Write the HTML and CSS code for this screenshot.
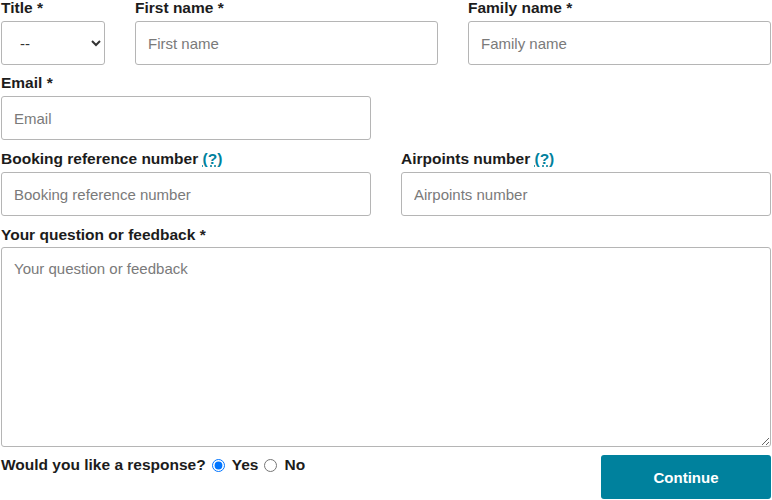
FILE: index.html
```html
<!DOCTYPE html>
<html lang="en">

<head>
    <meta charset="UTF-8">
    <meta name="viewport" content="width=device-width, initial-scale=1.0">
    <title>Contact us</title>
    <link rel="stylesheet" href="styles.css">
</head>

<body>
    <form class="contact">
        <div class="row">
            <div class="field title">
                <label for="title">Title <span class="req">*</span></label>
                <select id="title">
                    <option>--</option>
                    <option>Mr</option>
                    <option>Mrs</option>
                    <option>Ms</option>
                </select>
            </div>
            <div class="field">
                <label for="first">First name <span class="req">*</span></label>
                <input type="text" id="first" placeholder="First name">
            </div>
            <div class="field">
                <label for="family">Family name <span class="req">*</span></label>
                <input type="text" id="family" placeholder="Family name">
            </div>
        </div>
        <div class="row">
            <div class="field half">
                <label for="email">Email <span class="req">*</span></label>
                <input type="email" id="email" placeholder="Email">
            </div>
        </div>
        <div class="row">
            <div class="field">
                <label for="booking">Booking reference number <abbr title="Your six character booking reference">(?)</abbr></label>
                <input type="text" id="booking" placeholder="Booking reference number">
            </div>
            <div class="field">
                <label for="airpoints">Airpoints number <abbr title="Your Airpoints membership number">(?)</abbr></label>
                <input type="text" id="airpoints" placeholder="Airpoints number">
            </div>
        </div>
        <div class="row last">
            <div class="field">
                <label for="question">Your question or feedback <span class="req">*</span></label>
                <textarea id="question" placeholder="Your question or feedback"></textarea>
            </div>
        </div>
        <div class="actions">
            <div class="response">
                <span>Would you like a response?</span>
                <input type="radio" name="response" id="yes" checked>
                <label for="yes">Yes</label>
                <input type="radio" name="response" id="no">
                <label for="no">No</label>
            </div>
            <button type="button" class="continue">Continue</button>
        </div>
    </form>
</body>

</html>
```

FILE: styles.css
```css
body {
    margin: 0;
    font-family: "Liberation Sans", Arial, sans-serif;
    color: #1c1c1c;
}

.contact {
    padding: 0 1px;
}

.row {
    display: flex;
    gap: 30px;
    margin-bottom: 11px;
}

.row:first-child {
    margin-bottom: 10px;
}

.row.last {
    margin-bottom: 8px;
}

.field {
    flex: 1;
    min-width: 0;
}

.field.title {
    flex: 0 0 104px;
}

.field.half {
    flex: 0 0 370px;
}

.field label {
    display: block;
    height: 16px;
    line-height: 16px;
    margin-bottom: 5px;
    font-size: 15.5px;
    font-weight: bold;
    white-space: nowrap;
}

.row.last label {
    margin-bottom: 4px;
}

.req {
    color: #222;
}

abbr {
    color: #00819d;
    text-decoration: underline dotted;
    text-underline-offset: 2px;
    cursor: help;
}

input[type="text"],
input[type="email"],
select,
textarea {
    display: block;
    box-sizing: border-box;
    width: 100%;
    height: 44px;
    margin: 0;
    padding: 0 12px;
    border: 1px solid #b5b5b5;
    border-radius: 3px;
    background: #fff;
    font-family: "Liberation Sans", Arial, sans-serif;
    font-size: 15px;
    color: #333;
}

input::placeholder,
textarea::placeholder {
    color: #7a7a7a;
}

select {
    padding: 0 8px 0 14px;
}

textarea {
    height: 200px;
    padding: 12px;
    resize: vertical;
}

.actions {
    display: flex;
    justify-content: space-between;
    align-items: flex-start;
}

.response {
    display: flex;
    align-items: center;
    padding-top: 2px;
    line-height: 16px;
    font-size: 15.5px;
    font-weight: bold;
}

.response input {
    margin: 0 7px 0 6px;
    width: 13px;
    height: 13px;
}

.continue {
    width: 170px;
    height: 44px;
    border: none;
    border-radius: 3px;
    background-color: #00819d;
    color: #fff;
    font-family: "Liberation Sans", Arial, sans-serif;
    font-size: 15px;
    font-weight: bold;
    cursor: pointer;
}
```
